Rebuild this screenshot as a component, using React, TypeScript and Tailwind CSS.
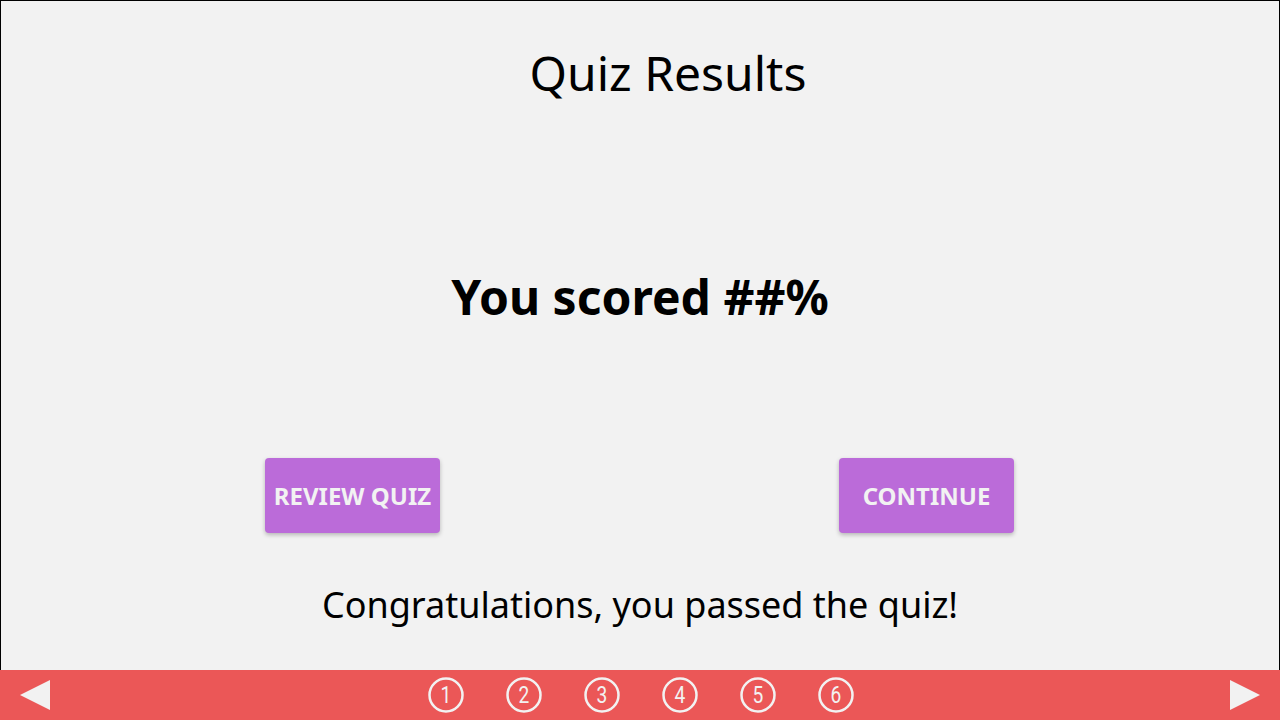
const steps = [1, 2, 3, 4, 5, 6];

function StepCircle({ n }: { n: number }) {
  return (
    <svg width="36" height="36" viewBox="0 0 36 36" className="block">
      <circle cx="18" cy="18" r="16.5" fill="none" stroke="#f2f2f2" strokeWidth="2.5" />
      <text
        x="18"
        y="26.5"
        textAnchor="middle"
        fill="#f2f2f2"
        fontSize="24"
        fontFamily="Roboto, sans-serif"
        transform="translate(18 0) scale(0.8 1) translate(-18 0)"
      >
        {n}
      </text>
    </svg>
  );
}

export default function App() {
  return (
    <div className="w-[1280px] h-[720px] bg-[#f2f2f2] flex flex-col font-['Noto_Sans',sans-serif] text-black">
      {/* Results area */}
      <div className="h-[670px] border-t border-l border-r border-black flex flex-col items-center">
        <h1 className="mt-[48px] pl-[56px] text-[48px] leading-[48px] font-normal">Quiz Results</h1>

        <h2 className="mt-[176px] text-[48px] leading-[48px] font-bold">You scored ##%</h2>

        <div className="mt-[137px] mr-[1px] flex gap-[399px]">
          <button className="w-[175px] h-[75px] rounded bg-[#bb6bd9] text-[#f2f2f2] text-[24px] font-bold shadow-[0_2px_4px_rgba(0,0,0,0.25)]">
            REVIEW QUIZ
          </button>
          <button className="w-[175px] h-[75px] rounded bg-[#bb6bd9] text-[#f2f2f2] text-[24px] font-bold shadow-[0_2px_4px_rgba(0,0,0,0.25)]">
            CONTINUE
          </button>
        </div>

        <p className="mt-[54px] text-[36px] leading-[36px]">Congratulations, you passed the quiz!</p>
      </div>

      {/* Footer nav */}
      <div className="h-[50px] bg-[#eb5757] flex items-center justify-between px-[20px]">
        <svg width="30" height="30" viewBox="0 0 30 30">
          <polygon points="0,15 30,0 30,30" fill="#f2f2f2" />
        </svg>
        <div className="flex gap-[42px] ml-[2px]">
          {steps.map((n) => (
            <StepCircle key={n} n={n} />
          ))}
        </div>
        <svg width="30" height="30" viewBox="0 0 30 30">
          <polygon points="0,0 30,15 0,30" fill="#f2f2f2" />
        </svg>
      </div>
    </div>
  );
}
